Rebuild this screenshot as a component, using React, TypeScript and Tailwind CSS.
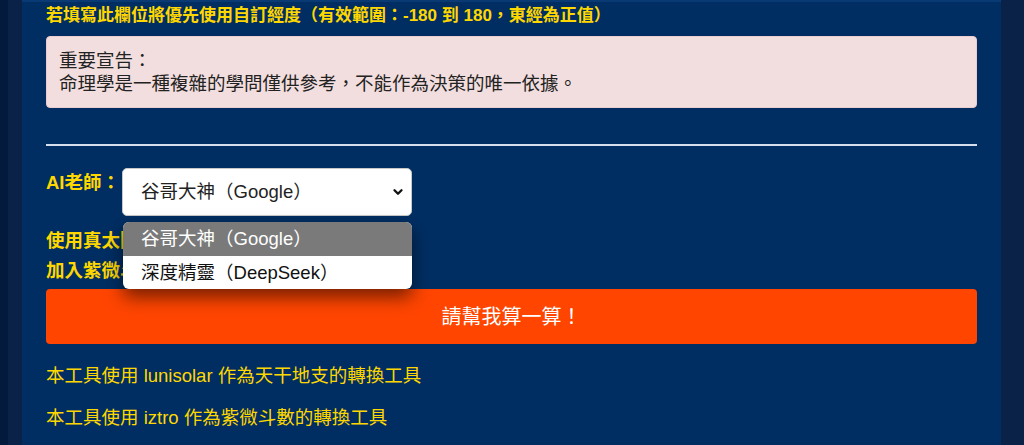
import { ChevronDown } from 'lucide-react';

const teachers = ['谷哥大神（Google）', '深度精靈（DeepSeek）'];

function TeacherSelect() {
  return (
    <div className="relative">
      <div className="flex h-[48px] w-[290px] items-center justify-between rounded-[5px] border border-[#c8c8c8] bg-white pl-[18px] pr-[6px] text-[18.5px] text-[#222]">
        <span>{teachers[0]}</span>
        <ChevronDown className="h-[14px] w-[14px] text-[#111]" strokeWidth={4} />
      </div>
      <ul className="absolute left-[1px] top-[54px] z-10 w-[289px] overflow-hidden rounded-[6px] bg-white text-[18.5px] shadow-[0_8px_18px_rgba(0,0,0,0.55)]">
        <li className="h-[34px] bg-[#7a7a7a] pl-[18px] leading-[34px] text-white">
          {teachers[0]}
        </li>
        <li className="h-[33px] pl-[18px] leading-[33px] text-[#111]">
          {teachers[1]}
        </li>
      </ul>
    </div>
  );
}

export default function App() {
  return (
    <div className="flex h-[445px] w-full overflow-hidden bg-[#0a2148] font-['Liberation_Sans','Noto_Sans_CJK_TC',sans-serif]">
      <div className="w-[8px] shrink-0 bg-[#031a3c]" />
      <div className="flex flex-1 pl-[14px] pr-[23px]">
        <main className="flex-1 border-t-2 border-[#0a3a73] bg-[#002e63] px-6 pt-[2px]">
          <p className="text-[17px] font-bold leading-[24px] text-[#ffd700]">
            若填寫此欄位將優先使用自訂經度（有效範圍：-180 到 180，東經為正值）
          </p>

          <div className="mt-[8px] rounded-[4px] border border-[#ebccd1] bg-[#f2dede] px-3 py-[12px] text-[18.5px] leading-[23px] text-[#222]">
            <p>重要宣告：</p>
            <p>命理學是一種複雜的學問僅供參考，不能作為決策的唯一依據。</p>
          </div>

          <hr className="mt-[36px] border-t-2 border-[#d4deec]" />

          <div className="mt-[22px] flex items-start gap-[2px]">
            <label className="pt-[3px] text-[18.5px] font-bold leading-[24px] text-[#ffd700]">
              AI老師：
            </label>
            <TeacherSelect />
          </div>

          <div className="mt-[10px] text-[18.5px] font-bold text-[#ffd700]">
            <p className="h-[30px] leading-[30px]">使用真太陽時：</p>
            <p className="h-[30px] leading-[30px]">加入紫微斗數：</p>
          </div>

          <button className="mt-[3px] h-[55px] w-full rounded-[4px] bg-[#ff4500] text-[20px] text-white">
            請幫我算一算！
          </button>

          <p className="mt-[20px] text-[18.5px] leading-[24px] text-[#ffd700]">
            本工具使用 lunisolar 作為天干地支的轉換工具
          </p>
          <p className="mt-[18px] text-[18.5px] leading-[24px] text-[#ffd700]">
            本工具使用 iztro 作為紫微斗數的轉換工具
          </p>
        </main>
      </div>
    </div>
  );
}
